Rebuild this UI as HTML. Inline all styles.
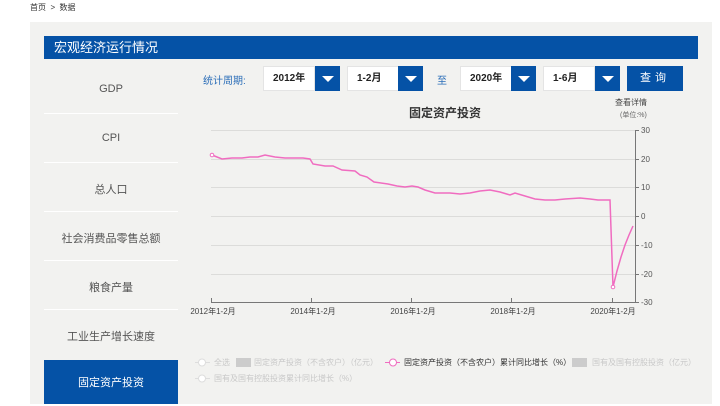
<!DOCTYPE html>
<html><head><meta charset="utf-8"><style>
*{margin:0;padding:0;box-sizing:border-box}
body{width:720px;height:404px;background:#fff;font-family:"Liberation Sans","Noto Sans CJK SC",sans-serif;position:relative;overflow:hidden;color:#333}
.a{position:absolute}
.panel{left:30px;top:22px;width:682px;height:382px;background:#f2f2f0}
.hdr{left:44px;top:36px;width:654px;height:23px;background:#0552a6;color:#fff;font-size:13px;line-height:23px;padding-left:10px}
.side{left:44px;width:134px;text-align:center;font-size:11px;color:#555}
.sep{left:44px;width:134px;height:1px;background:#fff}
.sel{background:#fff;border:1px solid #e4e4e4;font-size:10px;font-weight:bold;line-height:24px;padding-left:9px;color:#222;height:25px}
.btn{background:#0552a6;height:25px;width:25px}
.btn:after{content:"";position:absolute;left:7px;top:10px;border-left:6px solid transparent;border-right:6px solid transparent;border-top:6px solid #fff}
</style></head><body>
<div class="a" style="left:30px;top:2px;font-size:8px;color:#333">首页 &nbsp;&gt;&nbsp; 数据</div>
<div class="a panel"></div>
<div class="a hdr">宏观经济运行情况</div>

<div class="a side" style="top:83px">GDP</div>
<div class="a sep" style="top:113px"></div>
<div class="a side" style="top:132px">CPI</div>
<div class="a sep" style="top:162px"></div>
<div class="a side" style="top:181px">总人口</div>
<div class="a sep" style="top:211px"></div>
<div class="a side" style="top:230px">社会消费品零售总额</div>
<div class="a sep" style="top:260px"></div>
<div class="a side" style="top:279px">粮食产量</div>
<div class="a sep" style="top:309px"></div>
<div class="a side" style="top:328px">工业生产增长速度</div>
<div class="a" style="left:44px;top:360px;width:134px;height:44px;background:#0552a6;color:#fff;font-size:11px;text-align:center;line-height:46px">固定资产投资</div>

<div class="a" style="left:203px;top:72px;font-size:10px;color:#2a6db8">统计周期:</div>
<div class="a sel" style="left:263px;top:66px;width:52px">2012年</div><div class="a btn" style="left:315px;top:66px"></div>
<div class="a sel" style="left:347px;top:66px;width:52px">1-2月</div><div class="a btn" style="left:398px;top:66px"></div>
<div class="a" style="left:437px;top:72px;font-size:10px;color:#2a6db8">至</div>
<div class="a sel" style="left:460px;top:66px;width:52px">2020年</div><div class="a btn" style="left:511px;top:66px"></div>
<div class="a sel" style="left:543px;top:66px;width:52px">1-6月</div><div class="a btn" style="left:595px;top:66px"></div>
<div class="a" style="left:627px;top:66px;width:56px;height:25px;background:#0552a6;color:#fff;font-size:11px;text-align:center;line-height:25px;letter-spacing:4px">查询</div>

<div class="a" style="left:409px;top:104px;font-size:12px;font-weight:bold;color:#333">固定资产投资</div>
<div class="a" style="left:615px;top:97px;font-size:8px;color:#444">查看详情</div>
<div class="a" style="left:620px;top:110px;font-size:7px;color:#666">(单位:%)</div>

<svg class="a" style="left:0;top:0" width="720" height="404">
<g stroke="#dcdcda" stroke-width="1">
<line x1="211" y1="130.5" x2="635" y2="130.5"/><line x1="211" y1="159.5" x2="635" y2="159.5"/><line x1="211" y1="187.5" x2="635" y2="187.5"/><line x1="211" y1="216.5" x2="635" y2="216.5"/><line x1="211" y1="245.5" x2="635" y2="245.5"/><line x1="211" y1="274.5" x2="635" y2="274.5"/>
</g>
<g stroke="#777" stroke-width="1">
<line x1="211" y1="302.5" x2="636" y2="302.5"/><line x1="635.5" y1="130" x2="635.5" y2="303"/>
<line x1="211.5" y1="298" x2="211.5" y2="303"/><line x1="311.5" y1="298" x2="311.5" y2="303"/><line x1="411.5" y1="298" x2="411.5" y2="303"/><line x1="511.5" y1="298" x2="511.5" y2="303"/><line x1="612.5" y1="298" x2="612.5" y2="303"/>
<line x1="635" y1="130.5" x2="639" y2="130.5"/><line x1="635" y1="159.5" x2="639" y2="159.5"/><line x1="635" y1="187.5" x2="639" y2="187.5"/><line x1="635" y1="216.5" x2="639" y2="216.5"/><line x1="635" y1="245.5" x2="639" y2="245.5"/><line x1="635" y1="274.5" x2="639" y2="274.5"/><line x1="635" y1="302.5" x2="639" y2="302.5"/>
</g>
<g font-size="8" fill="#555" font-family="Liberation Sans,sans-serif">
<text x="641" y="133">30</text><text x="641" y="162">20</text><text x="641" y="190">10</text><text x="641" y="219">0</text><text x="641" y="248">-10</text><text x="641" y="277">-20</text><text x="641" y="305">-30</text>
</g>
<g font-size="8" fill="#444" font-family="Liberation Sans,Noto Sans CJK SC,sans-serif" text-anchor="middle">
<text x="213" y="314">2012年1-2月</text><text x="313" y="314">2014年1-2月</text><text x="413" y="314">2016年1-2月</text><text x="513" y="314">2018年1-2月</text><text x="613" y="314">2020年1-2月</text>
</g>
<polyline fill="none" stroke="#f06cc0" stroke-width="1.5" points="212,155 222,159 232,158 242,158 250,157 258,157 265,155 275,157 285,158 293,158 303,158 310,159 313,164 325,166 333,166 342,170 355,171 360,175 367,177 374,182 388,184 397,186 405,187 412,186 418,187 425,190 435,193 450,193 460,194 470,193 480,191 490,190 500,192 510,195 515,193 525,196 535,199 545,200 555,200 565,199 580,198 590,199 598,200 608,200 610,200 613,287 617,271 621,257 625,245 629,235 633,226"/>
<circle cx="212" cy="155" r="1.8" fill="#fff" stroke="#f06cc0"/>
<circle cx="613" cy="287" r="1.8" fill="#fff" stroke="#f06cc0"/>
<g font-size="8" fill="#c8c8c8" font-family="Liberation Sans,Noto Sans CJK SC,sans-serif">
<line x1="195" y1="362.5" x2="210" y2="362.5" stroke="#ddd"/><circle cx="202" cy="362.5" r="3.5" fill="#fff" stroke="#ddd"/>
<text x="214" y="365">全选</text>
<rect x="236" y="358" width="15" height="9" fill="#ccc"/><text x="254" y="365">固定资产投资（不含农户）（亿元）</text>
<line x1="385" y1="362.5" x2="400" y2="362.5" stroke="#f06cc0"/><circle cx="393" cy="362.5" r="3.5" fill="#fff" stroke="#f06cc0"/>
<text x="404" y="365" fill="#333">固定资产投资（不含农户）累计同比增长（%）</text>
<rect x="572" y="358" width="15" height="9" fill="#ccc"/><text x="592" y="365">国有及国有控股投资（亿元）</text>
<line x1="195" y1="378.5" x2="210" y2="378.5" stroke="#ddd"/><circle cx="202" cy="378.5" r="3.5" fill="#fff" stroke="#ddd"/>
<text x="214" y="381">国有及国有控股投资累计同比增长（%）</text>
</g>
</svg>
</body></html>
